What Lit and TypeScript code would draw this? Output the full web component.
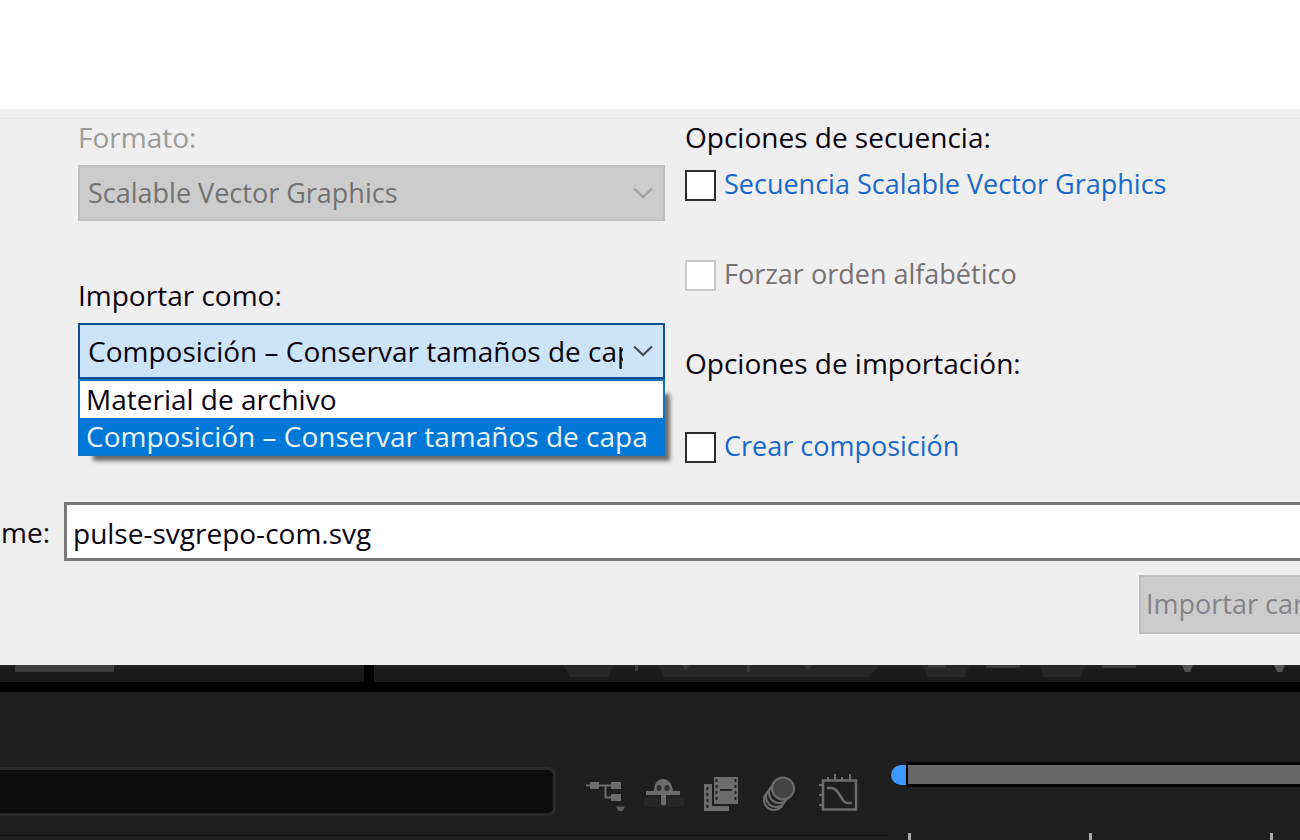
import { LitElement, html, css, svg } from "lit";
import { customElement, property, state } from "lit/decorators.js";

const chevron = html`<svg class="chevron" viewBox="0 0 20 12" aria-hidden="true">
  <path d="M1 1.5 L10 10 L19 1.5" fill="none" stroke="currentColor" stroke-width="2.2" />
</svg>`;

@customElement("import-dialog")
class ImportDialog extends LitElement {
  @property() fileName = "";
  @state() private mode = 1;

  private modes = ["Material de archivo", "Composición – Conservar tamaños de capa"];

  static styles = css`
    * { box-sizing: border-box; }
    :host {
      display: block;
      background: #efefef;
      color: #0a0410;
      font: 28px/36px "Open Sans", "Noto Sans", sans-serif;
      overflow: hidden;
    }
    .edge { height: 10px; border-bottom: 1px solid #e9e9e9; }
    .columns {
      display: grid;
      grid-template-columns: 587px 1fr;
      column-gap: 20px;
      padding-left: 78px;
      white-space: nowrap;
    }
    .left { display: flex; flex-direction: column; gap: 56px; }
    .field { display: flex; flex-direction: column; gap: 10px; }
    .faded { color: #9b9b9b; }
    .combo { position: relative; }
    .select {
      display: block;
      appearance: none;
      width: 100%;
      height: 56px;
      margin: 0;
      padding: 0 40px 0 8px;
      border: 2px solid #0f4f8f;
      border-radius: 0;
      background: #cce4f7;
      color: inherit;
      font: inherit;
      text-overflow: clip;
      outline: none;
      opacity: 1;
    }
    .select:disabled {
      border-color: #bfbfbf;
      background: #cccccc;
      color: #727272;
      font-size: 27px;
    }
    .chevron {
      position: absolute;
      right: 12px;
      top: 22px;
      width: 20px;
      height: 12px;
      color: #444c55;
      pointer-events: none;
    }
    .off .chevron { color: #a0a0a0; }
    .list {
      position: absolute;
      z-index: 1;
      top: 100%;
      left: 0;
      right: 0;
      margin: 0;
      padding: 0;
      list-style: none;
      border: 2px solid #0f72c5;
      border-bottom-width: 1px;
      background: #ffffff;
      box-shadow: 10px 10px 4px -5px rgba(0, 0, 0, 0.55);
    }
    .option { height: 37px; padding: 0 6px; cursor: default; }
    .option.chosen { background: #0078d7; color: #eaf4ff; }
    .right { display: flex; flex-direction: column; }
    .group { display: flex; flex-direction: column; gap: 12px; }
    .checks { display: flex; flex-direction: column; gap: 54px; }
    .check { display: flex; align-items: center; gap: 8px; color: #1a68cc; font-size: 27px; }
    .check.off { color: #777272; }
    .caption { height: 36px; line-height: 34px; }
    .group.last { gap: 48px; padding-top: 52px; }
    .box {
      appearance: none;
      flex: none;
      width: 31px;
      height: 31px;
      margin: 0;
      border: 2px solid #2c2c2c;
      background: #ffffff;
    }
    .box:checked { background: #0078d7; }
    .box:disabled { border-color: #c8c8c8; }
    .name { display: flex; align-items: center; gap: 14px; padding-top: 37px; }
    .name-label {
      display: flex;
      flex: none;
      justify-content: flex-end;
      width: 50px;
      overflow: hidden;
      white-space: nowrap;
    }
    .text {
      flex: 1;
      min-width: 0;
      height: 59px;
      padding: 3px 6px 0;
      border: 3px solid #7a7a7a;
      border-right: none;
      border-radius: 0;
      background: #ffffff;
      color: inherit;
      font: inherit;
      outline: none;
    }
    .actions { display: flex; justify-content: flex-end; padding: 14px 0 31px; }
    .folder {
      width: 161px;
      height: 59px;
      padding: 0 0 2px 5px;
      border: 2px solid #bfbfbf;
      border-right: none;
      background: #cccccc;
      color: #85838a;
      font: inherit;
      font-size: 27px;
      text-align: left;
      white-space: nowrap;
      overflow: hidden;
    }
  `;

  render() {
    return html`
      <div class="edge"></div>
      <div class="columns">
        <div class="left">
          <div class="field">
            <label class="faded" for="format">Formato:</label>
            <div class="combo off">
              <select class="select" id="format" disabled>
                <option>Scalable Vector Graphics</option>
              </select>
              ${chevron}
            </div>
          </div>
          <div class="field">
            <label for="mode">Importar como:</label>
            <div class="combo">
              <select class="select" id="mode"
                @change=${(e: Event) => (this.mode = (e.target as HTMLSelectElement).selectedIndex)}>
                ${this.modes.map((m, i) => html`<option ?selected=${i === this.mode}>${m}</option>`)}
              </select>
              ${chevron}
              <ul class="list" role="listbox" aria-label="Importar como">
                ${this.modes.map((m, i) => html`<li
                  class="option ${i === this.mode ? "chosen" : ""}"
                  role="option"
                  aria-selected=${i === this.mode}
                  @click=${() => (this.mode = i)}>${m}</li>`)}
              </ul>
            </div>
          </div>
        </div>
        <div class="right">
          <div class="group">
            <div>Opciones de secuencia:</div>
            <div class="checks">
              <label class="check"><input class="box" type="checkbox" /><span class="caption">Secuencia Scalable Vector Graphics</span></label>
              <label class="check off"><input class="box" type="checkbox" disabled /><span class="caption">Forzar orden alfabético</span></label>
            </div>
          </div>
          <div class="group last">
            <div>Opciones de importación:</div>
            <label class="check"><input class="box" type="checkbox" /><span class="caption">Crear composición</span></label>
          </div>
        </div>
      </div>
      <div class="name">
        <label class="name-label" for="name">name:</label>
        <input class="text" id="name" type="text" .value=${this.fileName} />
      </div>
      <div class="actions"><button class="folder" disabled>Importar carpeta</button></div>
    `;
  }
}

const tools = [
  {
    label: "Minigráfico de composición",
    art: svg`<path d="M0 12.500H34M19.500 12.500V24.500H28" fill="none" stroke="#6c6c6c" stroke-width="2"/>
      <path d="M4 9H13V16H4ZM25 9H35V16H25ZM25 21H35V28H25Z" fill="#6c6c6c"/>
      <path d="M30 33.500H39L36.500 38H32.500Z" fill="#5c5c5c"/>`,
  },
  {
    label: "Ocultar capas tímidas",
    art: svg`<rect x="0" y="24" width="40" height="10" fill="#262626"/>
      <path d="M2 18H10C10 10 14 6 19 6S28 10 29 18H36V22H22V31Q20 34 17 31V22H2Z" fill="#6c6c6c"/>
      <ellipse cx="15" cy="15" rx="2.500" ry="3" fill="#303030"/><ellipse cx="23" cy="15" rx="2.500" ry="3" fill="#303030"/>`,
  },
  {
    label: "Fusión de fotogramas",
    art: svg`<path d="M2 11H10V33H27V38H2Z" fill="#6c6c6c"/>
      <path d="M12 4H36V31H12Z" fill="#6c6c6c"/>
      <path d="M14.500 6V30M33.500 6V30" stroke="#202020" stroke-width="2" stroke-dasharray="3 3"/>
      <path d="M5.500 14V36" stroke="#202020" stroke-width="2" stroke-dasharray="3 3"/>
      <path d="M18 17H30" stroke="#202020" stroke-width="2"/>`,
  },
  {
    label: "Desenfoque de movimiento",
    art: svg`<g fill="#202020" stroke="#6c6c6c" stroke-width="2"><circle cx="14" cy="27" r="10"/>
      <circle cx="16" cy="24" r="10"/><circle cx="19" cy="20" r="10"/>
      <circle cx="23" cy="15.500" r="11" fill="#444444"/></g>`,
  },
  {
    label: "Editor de gráficos",
    art: svg`<path d="M5 7.500H38V36.500H5Z" fill="none" stroke="#6c6c6c" stroke-width="2.500"/>
      <path d="M9 15H14C22 16 23 30 29 30H34" fill="none" stroke="#6c6c6c" stroke-width="2.500"/>
      <path d="M10 4V7M17 1V7M24 4V7M32 1V7M1 12H5M1 22H5M1 32H5" stroke="#6c6c6c" stroke-width="2"/>`,
  },
];

@customElement("timeline-panel")
class TimelinePanel extends LitElement {
  static styles = css`
    * { box-sizing: border-box; }
    :host { display: flex; flex-direction: column; background: #1e1e1e; }
    .strip { display: block; flex: none; width: 1300px; height: 17px; }
    .clip { overflow: hidden; border-bottom: 10px solid #000000; }
    .body { flex: 1; display: grid; grid-template-columns: 888px 1fr; overflow: hidden; }
    .head { display: flex; flex-direction: column; padding-top: 75px; }
    .row { display: flex; align-items: center; gap: 30px; }
    .search {
      width: 556px;
      height: 49px;
      padding: 0 12px;
      border: 3px solid #2a2a2a;
      border-left: none;
      border-radius: 0 8px 8px 0;
      background: #0e0e0e;
      color: #9a9a9a;
      font: 20px/24px "Open Sans", sans-serif;
      outline: none;
    }
    .tools { display: flex; gap: 16px; padding-top: 4px; }
    .tool { width: 42px; height: 42px; padding: 0; border: none; background: none; }
    .icon { display: block; width: 42px; height: 42px; }
    .rule { height: 3px; margin-top: 19px; background: #0d0d0d; border-bottom: 2px solid #201d1e; }
    .track { display: flex; flex-direction: column; justify-content: space-between; padding-top: 70px; }
    .bar { display: flex; align-items: center; padding-left: 3px; }
    .handle { width: 15px; height: 20px; border-radius: 10px 0 0 10px; background: #3f97fb; }
    .range { flex: 1; height: 25px; border: 3px solid #000000; border-width: 3px 0 3px 2px; background: #676767; }
    .ticks { display: flex; gap: 178px; height: 7px; padding-left: 20px; }
    .tick { flex: none; width: 3px; background: #a8a8a8; }
  `;

  render() {
    return html`
      <div class="clip">
        <svg class="strip" viewBox="0 0 1300 17" aria-hidden="true">
          <rect width="1300" height="17" fill="#1a1a1a" /><rect width="1300" height="3" fill="#202020" />
          <rect x="15" width="99" height="7" fill="#3c3c3c" />
          <rect x="364" width="10" height="17" fill="#000000" />
          <path d="M564 0H614L608 12H570ZM658 0H880L868 12H664ZM922 0H970L964 12H928ZM1040 0H1086L1080 12H1044Z" fill="#272727" />
          <path d="M635 0H638V6H635ZM682 0H690L686 6ZM747 0H750V7H747ZM804 0H812L808 5ZM928 0H946V3H928ZM986 0H1020V3H986ZM1102 0H1136V3H1102Z" fill="#393939" />
          <path d="M1182 0H1193L1190 7H1185ZM1274 0H1285L1282 7H1277Z" fill="#555555" />
        </svg>
      </div>
      <div class="body">
        <div class="head">
          <div class="row">
            <input class="search" type="text" aria-label="Buscar" />
            <div class="tools">
              ${tools.map((t) => html`<button class="tool" aria-label=${t.label}>
                <svg class="icon" viewBox="0 0 42 42" aria-hidden="true">${t.art}</svg>
              </button>`)}
            </div>
          </div>
          <div class="rule"></div>
        </div>
        <div class="track">
          <div class="bar"><div class="handle"></div><div class="range"></div></div>
          <div class="ticks"><span class="tick"></span><span class="tick"></span><span class="tick"></span></div>
        </div>
      </div>
    `;
  }
}

@customElement("app-root")
class AppRoot extends LitElement {
  static styles = css`
    :host { display: flex; flex-direction: column; min-height: 100vh; overflow: hidden; }
    .files { flex: none; height: 109px; background: #ffffff; }
    .timeline { flex: 1; }
  `;

  render() {
    return html`
      <div class="files"></div>
      <import-dialog fileName="pulse-svgrepo-com.svg"></import-dialog>
      <timeline-panel class="timeline"></timeline-panel>
    `;
  }
}
